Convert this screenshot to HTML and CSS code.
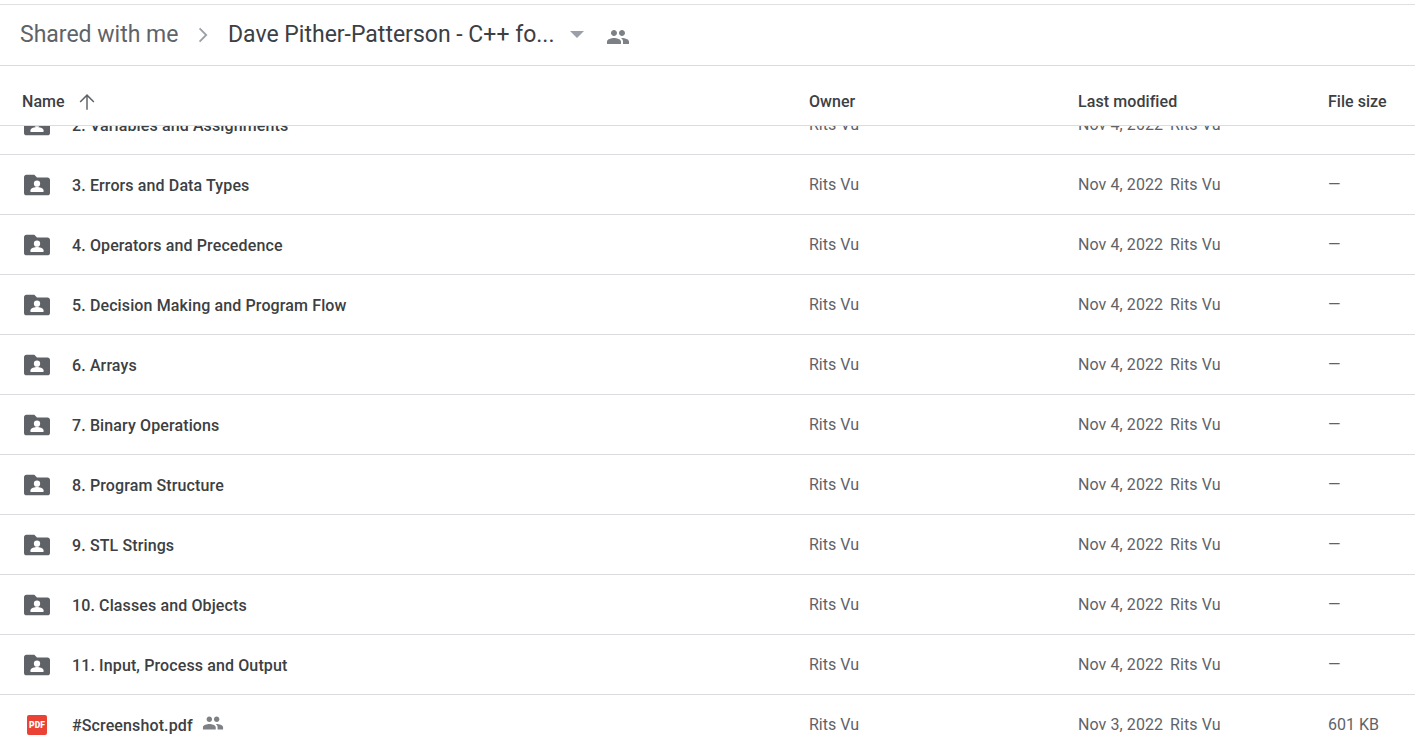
FILE: index.html
```html
<!DOCTYPE html>
<html lang="en">
<head>
<meta charset="utf-8">
<title>Shared with me</title>
<link rel="stylesheet" href="styles.css">
</head>
<body>
<svg class="defs" width="0" height="0" aria-hidden="true">
  <symbol id="people" viewBox="0 0 24 24"><path d="M16 11c1.660 0 2.990-1.340 2.990-3S17.660 5 16 5s-3 1.340-3 3 1.340 3 3 3zm-8 0c1.660 0 2.990-1.340 2.990-3S9.660 5 8 5 5 6.340 5 8s1.340 3 3 3zm0 2c-2.330 0-7 1.170-7 3.500V19h14v-2.500C15 14.170 10.330 13 8 13zm8 0c-.29 0-.62.02-.97.05 1.160.84 1.970 1.970 1.970 3.450V19h6v-2.500c0-2.330-4.670-3.500-7-3.500z"/></symbol>
  <symbol id="folder" viewBox="0 0 24 24"><path d="M9.500 2.500H2.200C1 2.500 0 3.500 0 4.700v14.600c0 1.200 1 2.200 2.200 2.200h19.600c1.200 0 2.200-1 2.200-2.200V7.200C24 6 23 5 21.800 5H12z"/><circle class="cut" cx="12" cy="10.800" r="2.900"/><path class="cut" d="M6 18.500v-1.600c0-2.100 4-3.100 6-3.100s6 1 6 3.100v1.600z"/></symbol>
</svg>
<div class="page">
  <header class="crumbs">
    <span class="crumb-root">Shared with me</span>
    <svg class="crumb-sep" viewBox="0 0 24 24"><path d="M8.600 5.400 15.200 12l-6.600 6.600" fill="none" stroke="currentColor" stroke-width="1.800"/></svg>
    <span class="crumb-current">Dave Pither-Patterson - C++ fo...</span>
    <span class="caret"></span>
    <svg class="crumb-people"><use href="#people"/></svg>
  </header>
  <div class="head-row">
    <div class="col-name head-name">
      <span>Name</span>
      <svg class="sort" viewBox="0 0 24 24"><path d="M12 20.500V4.500M4.500 12 12 4.500l7.500 7.500" fill="none" stroke="currentColor" stroke-width="1.600"/></svg>
    </div>
    <div class="col-owner">Owner</div>
    <div class="col-mod">Last modified</div>
    <div class="col-size">File size</div>
  </div>
  <div class="list">
    <div class="rows">
      <div class="row"><div class="col-name"><span class="ico-wrap"><svg class="ico-folder"><use href="#folder"/></svg></span><span class="fname">2. Variables and Assignments</span></div><div class="col-owner">Rits Vu</div><div class="col-mod">Nov 4, 2022<span class="by">Rits Vu</span></div><div class="col-size">—</div></div>
      <div class="row"><div class="col-name"><span class="ico-wrap"><svg class="ico-folder"><use href="#folder"/></svg></span><span class="fname">3. Errors and Data Types</span></div><div class="col-owner">Rits Vu</div><div class="col-mod">Nov 4, 2022<span class="by">Rits Vu</span></div><div class="col-size">—</div></div>
      <div class="row"><div class="col-name"><span class="ico-wrap"><svg class="ico-folder"><use href="#folder"/></svg></span><span class="fname">4. Operators and Precedence</span></div><div class="col-owner">Rits Vu</div><div class="col-mod">Nov 4, 2022<span class="by">Rits Vu</span></div><div class="col-size">—</div></div>
      <div class="row"><div class="col-name"><span class="ico-wrap"><svg class="ico-folder"><use href="#folder"/></svg></span><span class="fname">5. Decision Making and Program Flow</span></div><div class="col-owner">Rits Vu</div><div class="col-mod">Nov 4, 2022<span class="by">Rits Vu</span></div><div class="col-size">—</div></div>
      <div class="row"><div class="col-name"><span class="ico-wrap"><svg class="ico-folder"><use href="#folder"/></svg></span><span class="fname">6. Arrays</span></div><div class="col-owner">Rits Vu</div><div class="col-mod">Nov 4, 2022<span class="by">Rits Vu</span></div><div class="col-size">—</div></div>
      <div class="row"><div class="col-name"><span class="ico-wrap"><svg class="ico-folder"><use href="#folder"/></svg></span><span class="fname">7. Binary Operations</span></div><div class="col-owner">Rits Vu</div><div class="col-mod">Nov 4, 2022<span class="by">Rits Vu</span></div><div class="col-size">—</div></div>
      <div class="row"><div class="col-name"><span class="ico-wrap"><svg class="ico-folder"><use href="#folder"/></svg></span><span class="fname">8. Program Structure</span></div><div class="col-owner">Rits Vu</div><div class="col-mod">Nov 4, 2022<span class="by">Rits Vu</span></div><div class="col-size">—</div></div>
      <div class="row"><div class="col-name"><span class="ico-wrap"><svg class="ico-folder"><use href="#folder"/></svg></span><span class="fname">9. STL Strings</span></div><div class="col-owner">Rits Vu</div><div class="col-mod">Nov 4, 2022<span class="by">Rits Vu</span></div><div class="col-size">—</div></div>
      <div class="row"><div class="col-name"><span class="ico-wrap"><svg class="ico-folder"><use href="#folder"/></svg></span><span class="fname">10. Classes and Objects</span></div><div class="col-owner">Rits Vu</div><div class="col-mod">Nov 4, 2022<span class="by">Rits Vu</span></div><div class="col-size">—</div></div>
      <div class="row"><div class="col-name"><span class="ico-wrap"><svg class="ico-folder"><use href="#folder"/></svg></span><span class="fname">11. Input, Process and Output</span></div><div class="col-owner">Rits Vu</div><div class="col-mod">Nov 4, 2022<span class="by">Rits Vu</span></div><div class="col-size">—</div></div>
      <div class="row"><div class="col-name"><span class="ico-wrap"><span class="ico-pdf">PDF</span></span><span class="fname">#Screenshot.pdf</span><svg class="file-people"><use href="#people"/></svg></div><div class="col-owner">Rits Vu</div><div class="col-mod">Nov 3, 2022<span class="by">Rits Vu</span></div><div class="col-size">601 KB</div></div>
    </div>
  </div>
</div>
</body>
</html>
```

FILE: styles.css
```css
* { box-sizing: border-box; }
html, body { margin: 0; height: 100%; overflow: hidden; background: #fff; }
body { font-family: Roboto, "Liberation Sans", sans-serif; color: #5f6368; font-size: 16px; }
.defs { position: absolute; }
.page { height: 749px; display: flex; flex-direction: column; padding-top: 4px; }
.crumbs {
  height: 62px; flex: none; display: flex; align-items: center; padding: 0 0 1px 20px;
  border-top: 1px solid #e0e0e0; border-bottom: 1px solid #dadce0;
}
.crumb-root { font-size: 23px; color: #5f6368; width: 158px; white-space: nowrap; }
.crumb-sep { width: 24px; height: 24px; margin-left: 13px; color: #9aa0a6; flex: none; }
.crumb-current { font-size: 23px; color: #3c4043; margin-left: 13px; width: 326px; white-space: nowrap; }
.caret { width: 0; height: 0; border-left: 7px solid transparent; border-right: 7px solid transparent; border-top: 7px solid #9aa0a6; margin-left: 16px; }
.crumb-people { width: 24px; height: 24px; margin: 4px 0 0 22px; fill: #7d8186; }
.head-row, .row { display: flex; align-items: center; padding-left: 22px; }
.head-row {
  height: 60px; flex: none; border-bottom: 1px solid #dadce0; padding-top: 12px;
  font-weight: 500; color: #3c4043; letter-spacing: .04px;
}
.col-name { width: 787px; flex: none; display: flex; align-items: center; }
.col-owner { width: 269px; flex: none; }
.col-mod { width: 250px; flex: none; white-space: nowrap; letter-spacing: .08px; }
.col-size { flex: none; white-space: nowrap; }
.sort { width: 22px; height: 22px; margin-left: 11px; color: #5f6368; }
.list { flex: 1; overflow: hidden; }
.rows { margin-top: -31px; }
.row { height: 60px; border-bottom: 1px solid #dadce0; }
.row .col-name { color: #3c4043; font-weight: 470; letter-spacing: .12px; }
.ico-wrap { width: 50px; flex: none; display: flex; align-items: center; }
.ico-folder { width: 26px; height: 26px; margin-left: 2px; fill: #5f6368; }
.cut { fill: #fff; }
.ico-pdf {
  width: 20px; height: 20px; margin-left: 5px; background: #ea4335; border-radius: 2px;
  color: #fff; font-size: 8.500px; font-weight: 900; line-height: 20px; text-align: center;
}
.fname { white-space: nowrap; margin-top: 2px; }
.file-people { width: 22px; height: 22px; margin-left: 9px; margin-bottom: 3px; fill: #7d8186; }
.by { margin-left: 7px; }
```
